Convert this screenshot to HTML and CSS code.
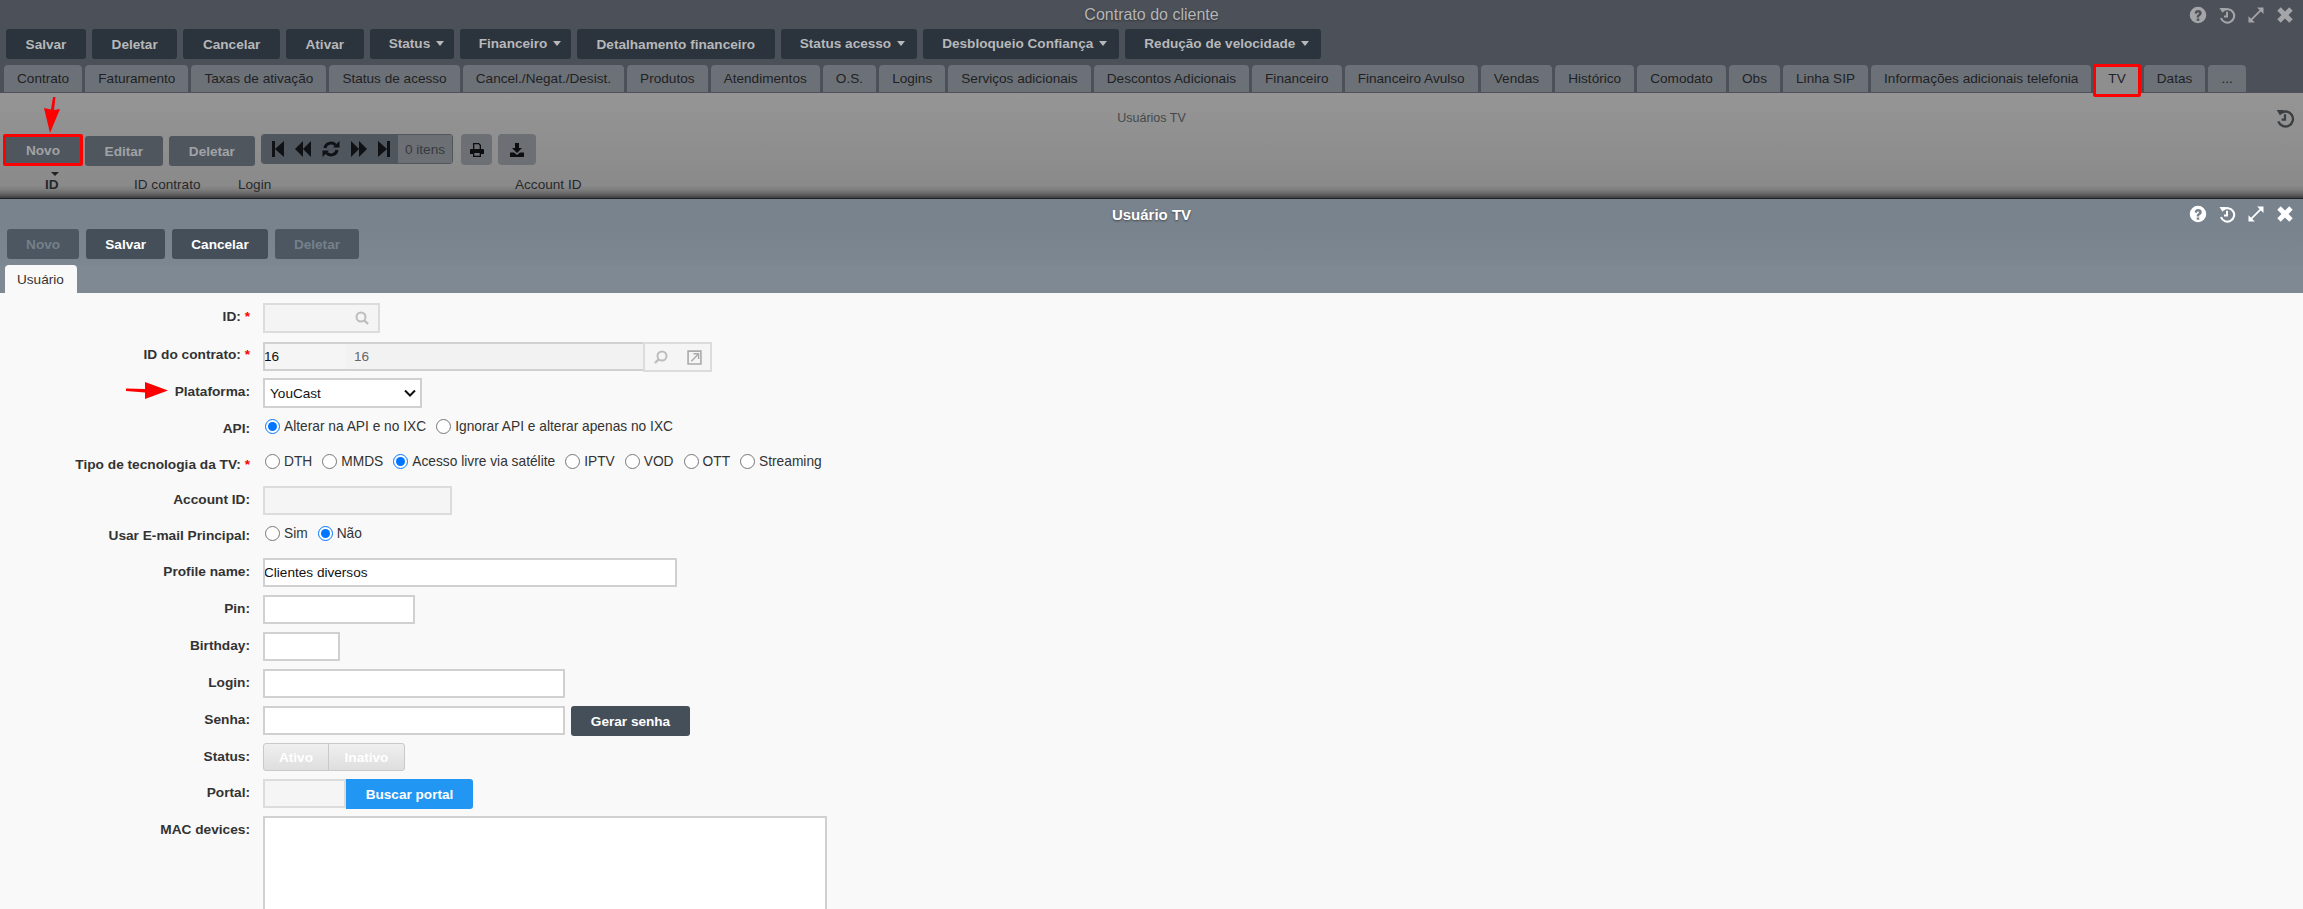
FILE: index.html
```html
<!DOCTYPE html>
<html lang="pt-BR">
<head>
  <meta charset="utf-8">
  <title>Contrato do cliente</title>
  <link rel="stylesheet" href="styles.css">
</head>
<body>
<svg class="icon-defs" aria-hidden="true">
  <symbol id="i-help" viewBox="0 0 24 24"><path fill-rule="evenodd" d="M12 1a11 11 0 1 1 0 22a11 11 0 0 1 0-22zM10.300 16.500v3.200h3.400v-3.200zM7.500 9.500l2.900 1c.3-1.200.8-1.800 1.700-1.800c.8 0 1.300.4 1.300 1c0 .7-.6 1.100-1.300 1.600c-1.200.8-1.800 1.600-1.800 3v.9h3.300v-.6c0-.7.4-1 1.200-1.600c1.200-.8 2.200-1.800 2.200-3.500c0-2.600-2.200-4.200-4.800-4.200c-2.500 0-4.400 1.300-4.700 4.200z"/></symbol>
  <symbol id="i-history" viewBox="0 0 24 24"><path d="M6.500 6.500A9 9 0 1 1 4 16" fill="none" stroke="currentColor" stroke-width="2.800"/><path d="M2 2.500h9l-5 6.500z"/><path d="M12 7.500v6.500h-4" fill="none" stroke="currentColor" stroke-width="2.600"/></symbol>
  <symbol id="i-expand" viewBox="0 0 24 24"><path d="M5.500 18.500L18.500 5.500" stroke="currentColor" stroke-width="2.400"/><path d="M13.500 2H22v8.500zM10.500 22H2v-8.500z"/></symbol>
  <symbol id="i-close" viewBox="0 0 24 24"><path d="M4 4L20 20M20 4L4 20" stroke="currentColor" stroke-width="6.500"/></symbol>
  <symbol id="i-first" viewBox="0 0 12 16"><path d="M0 0h3v16H0zM12 0v16L3 8z"/></symbol>
  <symbol id="i-prev" viewBox="0 0 16 16"><path d="M8 0v16L0 8zM16 0v16L8 8z"/></symbol>
  <symbol id="i-refresh" viewBox="0 0 18 16"><path d="M3 7a6 5.500 0 0 1 10.500-3M15 9a6 5.500 0 0 1-10.500 3" fill="none" stroke="currentColor" stroke-width="3"/><path d="M17.500 0v6.500h-6.500zM.5 16V9.500H7z"/></symbol>
  <symbol id="i-next" viewBox="0 0 16 16"><path d="M0 0v16L8 8zM8 0v16L16 8z"/></symbol>
  <symbol id="i-last" viewBox="0 0 12 16"><path d="M12 0H9v16h3zM0 0v16L9 8z"/></symbol>
  <symbol id="i-print" viewBox="0 0 14 14"><path fill-rule="evenodd" d="M3 0h6l2 2v4h2a1 1 0 0 1 1 1v4h-3v3H3v-3H0V7a1 1 0 0 1 1-1h2zM4.300 1.300V6h5.400V2.800L8.500 1.300zM4.300 10v2.700h5.400V10z"/></symbol>
  <symbol id="i-download" viewBox="0 0 14 14"><path d="M5 0h4v5h3L7 10L2 5h3zM0 9.500h4L7 12l3-2.500h4V14H0z"/></symbol>
  <symbol id="i-search" viewBox="0 0 14 14"><circle cx="6" cy="6" r="4.500" fill="none" stroke="currentColor" stroke-width="2"/><path d="M9.500 9.500L13 13" stroke="currentColor" stroke-width="2.400"/></symbol>
  <symbol id="i-search-left" viewBox="0 0 14 14"><circle cx="8" cy="6" r="4.500" fill="none" stroke="currentColor" stroke-width="2"/><path d="M4.500 9.500L1 13" stroke="currentColor" stroke-width="2.400"/></symbol>
  <symbol id="i-open" viewBox="0 0 14 14"><path d="M1 1h12v12H1z" fill="none" stroke="currentColor" stroke-width="1.500"/><path d="M4 10.500L10 4.500M6 3.500h4.800v4.800" fill="none" stroke="currentColor" stroke-width="1.300"/></symbol>
</svg>

<div class="contract">
  <div class="win-head">
    <span></span>
    <span class="win-title">Contrato do cliente</span>
    <div class="win-icons">
      <svg class="icon"><use href="#i-help"/></svg>
      <svg class="icon"><use href="#i-history"/></svg>
      <svg class="icon"><use href="#i-expand"/></svg>
      <svg class="icon"><use href="#i-close"/></svg>
    </div>
  </div>
  <div class="toolbar">
    <a class="btn btn-dark">Salvar</a>
    <a class="btn btn-dark">Deletar</a>
    <a class="btn btn-dark">Cancelar</a>
    <a class="btn btn-dark">Ativar</a>
    <a class="btn btn-dark btn-menu btn-menu-short">Status<i class="caret"></i></a>
    <a class="btn btn-dark btn-menu btn-menu-short">Financeiro<i class="caret"></i></a>
    <a class="btn btn-dark">Detalhamento financeiro</a>
    <a class="btn btn-dark btn-menu">Status acesso<i class="caret"></i></a>
    <a class="btn btn-dark btn-menu">Desbloqueio Confiança<i class="caret"></i></a>
    <a class="btn btn-dark btn-menu">Redução de velocidade<i class="caret"></i></a>
  </div>
  <div class="tabs">
    <a class="tab">Contrato</a>
    <a class="tab">Faturamento</a>
    <a class="tab">Taxas de ativação</a>
    <a class="tab">Status de acesso</a>
    <a class="tab">Cancel./Negat./Desist.</a>
    <a class="tab">Produtos</a>
    <a class="tab">Atendimentos</a>
    <a class="tab">O.S.</a>
    <a class="tab">Logins</a>
    <a class="tab">Serviços adicionais</a>
    <a class="tab">Descontos Adicionais</a>
    <a class="tab">Financeiro</a>
    <a class="tab">Financeiro Avulso</a>
    <a class="tab">Vendas</a>
    <a class="tab">Histórico</a>
    <a class="tab">Comodato</a>
    <a class="tab">Obs</a>
    <a class="tab">Linha SIP</a>
    <a class="tab">Informações adicionais telefonia</a>
    <a class="tab tab-marked">TV</a>
    <a class="tab">Datas</a>
    <a class="tab">...</a>
  </div>
  <div class="panel">
    <div class="panel-head">
      <span></span>
      <span class="panel-title">Usuários TV</span>
      <svg class="icon icon-history"><use href="#i-history"/></svg>
    </div>
    <div class="panel-tools">
      <a class="btn btn-grey btn-marked">Novo</a>
      <a class="btn btn-grey">Editar</a>
      <a class="btn btn-grey">Deletar</a>
      <div class="pager">
        <div class="pager-nav">
          <svg class="pg-s"><use href="#i-first"/></svg>
          <svg class="pg-m"><use href="#i-prev"/></svg>
          <svg class="pg-l"><use href="#i-refresh"/></svg>
          <svg class="pg-m"><use href="#i-next"/></svg>
          <svg class="pg-s"><use href="#i-last"/></svg>
        </div>
        <span class="pager-count">0 itens</span>
      </div>
      <a class="tool-btn tool-print"><svg><use href="#i-print"/></svg></a>
      <a class="tool-btn tool-down"><svg><use href="#i-download"/></svg></a>
    </div>
    <div class="grid-head">
      <div class="col-id"><i class="sort-arrow"></i><b>ID</b></div>
      <span>ID contrato</span>
      <span>Login</span>
      <span>Account ID</span>
    </div>
  </div>
</div>

<div class="modal">
  <div class="modal-head">
    <span></span>
    <span class="modal-title">Usuário TV</span>
    <div class="win-icons modal-icons">
      <svg class="icon"><use href="#i-help"/></svg>
      <svg class="icon"><use href="#i-history"/></svg>
      <svg class="icon"><use href="#i-expand"/></svg>
      <svg class="icon"><use href="#i-close"/></svg>
    </div>
  </div>
  <div class="modal-toolbar">
    <a class="btn btn-slate btn-off">Novo</a>
    <a class="btn btn-slate">Salvar</a>
    <a class="btn btn-slate">Cancelar</a>
    <a class="btn btn-slate btn-off">Deletar</a>
  </div>
  <div class="modal-tabs"><a class="modal-tab">Usuário</a></div>

  <form class="form">
    <div class="row h38">
      <label class="lbl">ID: <span class="req">*</span></label>
      <div class="search-field"><svg class="ico-search"><use href="#i-search"/></svg></div>
    </div>
    <div class="row h37">
      <label class="lbl">ID do contrato: <span class="req">*</span></label>
      <div class="ref-field">
        <input class="ref-id" value="16">
        <input class="ref-name" value="16" disabled>
        <div class="ref-btns">
          <svg class="ico-search"><use href="#i-search-left"/></svg>
          <svg class="ico-open"><use href="#i-open"/></svg>
        </div>
      </div>
    </div>
    <div class="row h37">
      <label class="lbl">Plataforma:</label>
      <select class="sel"><option>YouCast</option></select>
    </div>
    <div class="row h36">
      <label class="lbl">API:</label>
      <div class="radios radios-low">
        <label class="radio"><input type="radio" name="api" checked>Alterar na API e no IXC</label>
        <label class="radio"><input type="radio" name="api">Ignorar API e alterar apenas no IXC</label>
      </div>
    </div>
    <div class="row h35">
      <label class="lbl">Tipo de tecnologia da TV: <span class="req">*</span></label>
      <div class="radios">
        <label class="radio"><input type="radio" name="tec">DTH</label>
        <label class="radio"><input type="radio" name="tec">MMDS</label>
        <label class="radio"><input type="radio" name="tec" checked>Acesso livre via satélite</label>
        <label class="radio"><input type="radio" name="tec">IPTV</label>
        <label class="radio"><input type="radio" name="tec">VOD</label>
        <label class="radio"><input type="radio" name="tec">OTT</label>
        <label class="radio"><input type="radio" name="tec">Streaming</label>
      </div>
    </div>
    <div class="row h36">
      <label class="lbl">Account ID:</label>
      <input class="inp inp-off w-account" disabled>
    </div>
    <div class="row h36">
      <label class="lbl">Usar E-mail Principal:</label>
      <div class="radios radios-low">
        <label class="radio"><input type="radio" name="mail">Sim</label>
        <label class="radio"><input type="radio" name="mail" checked>Não</label>
      </div>
    </div>
    <div class="row h37">
      <label class="lbl">Profile name:</label>
      <input class="inp w-profile" value="Clientes diversos">
    </div>
    <div class="row h37">
      <label class="lbl">Pin:</label>
      <input class="inp w-pin">
    </div>
    <div class="row h37">
      <label class="lbl">Birthday:</label>
      <input class="inp w-birthday">
    </div>
    <div class="row h37">
      <label class="lbl">Login:</label>
      <input class="inp w-login">
    </div>
    <div class="row h37">
      <label class="lbl">Senha:</label>
      <input class="inp w-login">
      <a class="btn btn-slate btn-password">Gerar senha</a>
    </div>
    <div class="row h36">
      <label class="lbl">Status:</label>
      <div class="toggle"><span class="toggle-on">Ativo</span><span class="toggle-off">Inativo</span></div>
    </div>
    <div class="row h37">
      <label class="lbl">Portal:</label>
      <input class="inp inp-off w-portal" disabled>
      <a class="btn btn-blue">Buscar portal</a>
    </div>
    <div class="row">
      <label class="lbl">MAC devices:</label>
      <textarea class="area"></textarea>
    </div>
  </form>
</div>

<!-- setas de marcação por cima da tela -->
<svg class="mark mark-down" width="24" height="38" viewBox="0 0 24 38"><path d="M13 0L15.500 0L14 13L20 12L10 36L4 11L11 12.500z" fill="#f00"/></svg>
<svg class="mark mark-right" width="44" height="18" viewBox="0 0 44 18"><path d="M0 6.500L19 7V0L42 8.500L19 17V10.500L0 9z" fill="#f00"/></svg>
</body>
</html>
```

FILE: styles.css
```css
html, body {
  margin: 0;
  height: 100%;
  overflow: hidden;
}

body {
  position: relative;
  display: flex;
  flex-direction: column;
  font-family: "Liberation Sans", Arial, sans-serif;
  font-size: 13.6px;
  background: #f9f9f9;
}

.icon-defs {
  display: none;
}

svg {
  fill: currentColor;
}

/* janela de tras, escurecida */
.contract {
  height: 199px;
  flex: none;
  display: flex;
  flex-direction: column;
  background: #4b5059;
  box-sizing: border-box;
  border-bottom: 1px solid #20242a;
}

.win-head {
  height: 29px;
  display: grid;
  grid-template-columns: 1fr auto 1fr;
  align-items: center;
}

.win-title {
  font-size: 16px;
  color: #b4b6b8;
  text-shadow: 0 1px 2px #333;
}

.win-icons {
  display: flex;
  justify-content: flex-end;
  gap: 11px;
  padding-right: 9px;
  color: #a3a5a8;
}

.icon {
  width: 18px;
  height: 18px;
}

.toolbar {
  display: flex;
  gap: 6px;
  padding-left: 6px;
}

.btn {
  display: flex;
  align-items: center;
  justify-content: center;
  height: 30px;
  box-sizing: border-box;
  padding: 0 19.6px;
  border-radius: 3px;
  font-weight: bold;
  white-space: nowrap;
}

.btn-dark {
  background: #2b333c;
  color: #b7b8ba;
}

.btn-menu {
  padding: 0 12px 2px 19px;
}

.btn-menu-short {
  padding-right: 9.5px;
}

.caret {
  margin-left: 6px;
  border: 4px solid transparent;
  border-top: 5px solid #b7b8ba;
  border-bottom: 0;
}

.tabs {
  display: flex;
  gap: 3px;
  height: 27px;
  margin-top: 6px;
  padding-left: 4px;
  border-bottom: 1px solid #4e5258;
}

.tab {
  display: flex;
  align-items: center;
  padding: 0 13.05px;
  background: #6c7177;
  color: #1f2124;
  border-radius: 4px 4px 0 0;
  white-space: nowrap;
}

.tab-marked {
  position: relative;
  z-index: 1;
  height: 33px;
  margin: -1px 0 0 -1px;
  padding: 0 12px 5px;
  box-sizing: border-box;
  background: #8e8e8e;
  border: 3px solid #f00;
  border-radius: 2px;
}

.panel {
  flex: 1;
  background: linear-gradient(#959595 0, #8a8a8a 88%, #7e7e7e 92%, #666 96%, #3e3e3e 100%);
}

.panel-head {
  height: 41px;
  box-sizing: border-box;
  padding-top: 17px;
  display: grid;
  grid-template-columns: 1fr auto 1fr;
  line-height: 16px;
}

.panel-title {
  font-size: 12.5px;
  color: #45484b;
}

.icon-history {
  justify-self: end;
  width: 20px;
  height: 20px;
  margin: -2px 8px 0 0;
  color: #3c3f42;
}

.panel-tools {
  display: flex;
  align-items: flex-start;
  height: 32px;
  padding-left: 3px;
}

.btn-grey {
  margin: 2px 6.5px 0 0;
  background: #50565e;
  color: #a0a3a6;
}

.btn-marked {
  width: 80px;
  height: 32px;
  margin: 0 2px 0 0;
  background: #50565e;
  border: 3px solid #f00;
  border-radius: 2px;
  padding: 0;
}

.pager {
  display: flex;
  height: 30px;
  box-sizing: border-box;
  border: 1px solid #50565e;
  border-radius: 3px;
  overflow: hidden;
}

.pager-nav {
  display: flex;
  align-items: center;
  gap: 11px;
  width: 136px;
  box-sizing: border-box;
  padding-left: 10px;
  background: #50565e;
  color: #0f1114;
}

.pg-s { width: 12px; height: 16px; }
.pg-m { width: 16px; height: 16px; }
.pg-l { width: 18px; height: 16px; }

.pager-count {
  display: flex;
  align-items: center;
  justify-content: center;
  width: 54px;
  background: #6c7075;
  color: #37393c;
}

.tool-btn {
  display: flex;
  align-items: center;
  justify-content: center;
  height: 31px;
  margin-left: 8px;
  background: #6c7075;
  border-radius: 4px;
  color: #0c0d0f;
}

.tool-btn svg {
  width: 14px;
  height: 14px;
}

.tool-print { width: 31px; }
.tool-down { width: 38px; margin-left: 6px; }

.grid-head {
  display: grid;
  grid-template-columns: 134px 104px 277px auto;
  align-items: end;
  height: 20px;
  margin-top: 6px;
  color: #26282a;
  line-height: 14px;
}

.col-id {
  padding-left: 45px;
  position: relative;
}

.sort-arrow {
  position: absolute;
  left: 51px;
  top: -6px;
  border: 4px solid transparent;
  border-top: 4px solid #222;
  border-bottom: 0;
}

/* janela da frente */
.modal {
  flex: 1;
  min-height: 0;
  display: flex;
  flex-direction: column;
  overflow: hidden;
}

.modal-head {
  height: 30px;
  flex: none;
  display: grid;
  grid-template-columns: 1fr auto 1fr;
  align-items: center;
  background: #78838e;
}

.modal-title {
  font-size: 15px;
  font-weight: bold;
  color: #fff;
  text-shadow: 0 1px 2px #444;
}

.modal-icons {
  color: #fff;
}

.modal-toolbar {
  display: flex;
  gap: 7px;
  padding: 0 0 6px 7px;
  background: linear-gradient(#78838e, #7d8791);
}

.modal-toolbar .btn {
  padding: 0 19.1px;
}

.btn-slate {
  background: #454f59;
  color: #fff;
}

.btn-off {
  background: #4c5762;
  color: #75808a;
}

.modal-tabs {
  height: 28px;
  flex: none;
  padding-left: 5px;
  background: #7f8994;
}

.modal-tab {
  display: flex;
  align-items: center;
  width: 72px;
  height: 28px;
  box-sizing: border-box;
  padding-left: 12px;
  background: #f9f9f9;
  color: #333;
  border-radius: 4px 4px 0 0;
}

.form {
  flex: 1;
  min-height: 0;
  padding-top: 10px;
  overflow: hidden;
}

.row {
  display: flex;
  align-items: flex-start;
}

.h35 { height: 35px; }
.h36 { height: 36px; }
.h37 { height: 37px; }
.h38 { height: 38px; }

.lbl {
  width: 250px;
  flex: none;
  margin-right: 13px;
  padding-top: 6px;
  line-height: 16px;
  text-align: right;
  font-size: 13.7px;
  font-weight: bold;
  color: #333;
}

.req {
  color: #f00;
}

.inp, .sel, .ref-id, .ref-name, .area {
  box-sizing: border-box;
  margin: 0;
  border: 2px solid #d0d0d0;
  border-radius: 0;
  font: 13.6px "Liberation Sans", Arial, sans-serif;
  color: #111;
  outline: none;
}

.inp {
  height: 29px;
  padding: 0;
  text-indent: -1px;
  background: #fff;
}

.inp-off {
  background: #f5f5f5;
  border-color: #dcdcdc;
}

.w-account { width: 189px; }
.w-profile { width: 414px; }
.w-pin { width: 152px; }
.w-birthday { width: 77px; }
.w-login { width: 302px; }
.w-portal { width: 83px; }

.search-field {
  width: 117px;
  height: 30px;
  box-sizing: border-box;
  display: flex;
  align-items: center;
  justify-content: flex-end;
  padding-right: 9px;
  background: #f4f4f4;
  border: 2px solid #dcdcdc;
}

.ico-search {
  width: 14px;
  height: 14px;
  color: #bdbdbd;
}

.ref-field {
  display: flex;
  align-items: flex-start;
  margin-top: 1px;
}

.ref-id {
  width: 83px;
  height: 29px;
  padding: 0;
  text-indent: -1px;
  background: #f5f5f5;
  border-right: 0;
}

.ref-name {
  width: 297px;
  height: 29px;
  padding: 0 0 0 8px;
  background: #f2f2f2;
  color: #666;
  border-left: 0;
  border-right: 0;
}

.ref-btns {
  width: 69px;
  height: 30px;
  box-sizing: border-box;
  display: flex;
  align-items: center;
  gap: 19px;
  padding-left: 9px;
  background: #f5f5f5;
  border: 2px solid #dcdcdc;
}

.ico-open {
  width: 15px;
  height: 15px;
  color: #aaa;
}

.sel {
  appearance: none;
  width: 159px;
  height: 30px;
  padding: 0 0 0 5px;
  background: #fff url("data:image/svg+xml,%3Csvg xmlns='http://www.w3.org/2000/svg' width='12' height='8'%3E%3Cpath d='M1 1.500l5 5 5-5' fill='none' stroke='%23111' stroke-width='2'/%3E%3C/svg%3E") no-repeat right 4px center;
}

.radios {
  display: flex;
  gap: 10px;
  padding: 3px 0 0 2px;
  font-size: 13.75px;
  color: #333;
}

.radios-low {
  padding-top: 4px;
}

.radio {
  display: flex;
  align-items: center;
  height: 15px;
  white-space: nowrap;
}

.radio input {
  width: 15px;
  height: 15px;
  margin: 0 4px 0 0;
}

.btn-password {
  width: 119px;
  margin-left: 6px;
  padding: 0;
}

.toggle {
  display: flex;
  height: 28px;
  box-sizing: border-box;
  border: 1px solid #c9c9c9;
  border-radius: 3px;
  background: linear-gradient(#efefef, #dedede);
  color: #fff;
  font-weight: bold;
}

.toggle span {
  display: flex;
  align-items: center;
  justify-content: center;
}

.toggle-on {
  width: 64px;
  border-right: 1px solid #c9c9c9;
}

.toggle-off {
  width: 75px;
}

.btn-blue {
  width: 127px;
  padding: 0;
  background: #2196f3;
  color: #fff;
  border-radius: 0 3px 3px 0;
}

.area {
  display: block;
  width: 564px;
  height: 200px;
  background: #fff;
  resize: none;
}

/* anotacoes vermelhas */
.mark {
  position: absolute;
}

.mark-down {
  left: 40px;
  top: 97px;
}

.mark-right {
  left: 126px;
  top: 382px;
}
```
